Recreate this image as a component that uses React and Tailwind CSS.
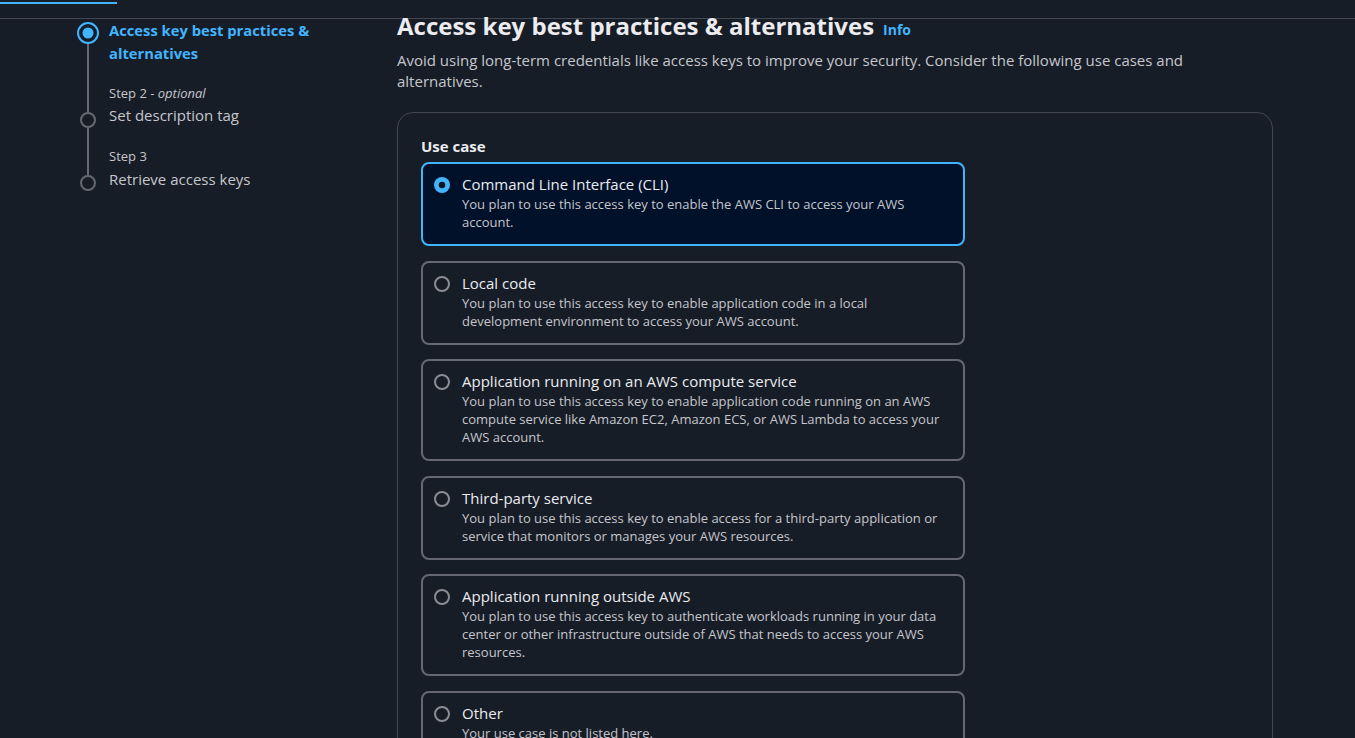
import React from 'react';

const FONT = { fontFamily: '"Open Sans", "Noto Sans", Arial, sans-serif' };

const USE_CASES = [
    {
        id: 'cli',
        title: 'Command Line Interface (CLI)',
        desc: 'You plan to use this access key to enable the AWS CLI to access your AWS account.',
    },
    {
        id: 'local',
        title: 'Local code',
        desc: 'You plan to use this access key to enable application code in a local development environment to access your AWS account.',
    },
    {
        id: 'compute',
        title: 'Application running on an AWS compute service',
        desc: 'You plan to use this access key to enable application code running on an AWS compute service like Amazon EC2, Amazon ECS, or AWS Lambda to access your AWS account.',
    },
    {
        id: 'third',
        title: 'Third-party service',
        desc: 'You plan to use this access key to enable access for a third-party application or service that monitors or manages your AWS resources.',
    },
    {
        id: 'outside',
        title: 'Application running outside AWS',
        desc: 'You plan to use this access key to authenticate workloads running in your data center or other infrastructure outside of AWS that needs to access your AWS resources.',
    },
    {
        id: 'other',
        title: 'Other',
        desc: 'Your use case is not listed here.',
    },
];

function Radio({ checked }) {
    return (
        <svg width="16" height="16" viewBox="0 0 16 16" className="shrink-0 mt-[4px]">
            {checked ? (
                <>
                    <circle cx="8" cy="8" r="8" fill="#42b4ff" />
                    <circle cx="8" cy="8" r="3.2" fill="#0f141a" />
                </>
            ) : (
                <circle cx="8" cy="8" r="7" fill="none" stroke="#8c8c94" strokeWidth="2" />
            )}
        </svg>
    );
}

function Tile({ item, checked }) {
    return (
        <div
            className={
                checked
                    ? 'flex gap-[12px] rounded-lg border-2 border-[#42b4ff] bg-[#001129] pl-[11px] pr-[14px] pt-[9px] pb-[13px]'
                    : 'flex gap-[12px] rounded-lg border-2 border-[#656871] pl-[11px] pr-[14px] pt-[9px] pb-[13px]'
            }
        >
            <Radio checked={checked} />
            <div className="flex-1">
                <div className="text-[15px] leading-[22px] text-[#ebebf0]">{item.title}</div>
                <div className="text-[13px] leading-[18px] text-[#c6c6cd]">{item.desc}</div>
            </div>
        </div>
    );
}

function StepDot({ active }) {
    if (active) {
        return (
            <svg width="22" height="22" viewBox="0 0 22 22" className="shrink-0 mt-[2px]">
                <circle cx="11" cy="11" r="10" fill="none" stroke="#42b4ff" strokeWidth="2" />
                <circle cx="11" cy="11" r="5.5" fill="#42b4ff" />
            </svg>
        );
    }
    return (
        <svg width="16" height="16" viewBox="0 0 16 16" className="shrink-0">
            <circle cx="8" cy="8" r="7" fill="none" stroke="#656871" strokeWidth="2" />
        </svg>
    );
}

function Steps() {
    return (
        <div className="w-[397px] shrink-0 pl-[77px] pt-[1px]">
            {/* step 1 */}
            <div className="flex gap-[10px]">
                <div className="flex w-[22px] flex-col items-center">
                    <StepDot active />
                    <div className="w-[2px] flex-1 bg-[#656871]" />
                </div>
                <div className="-mt-[1px] pb-[21px] text-[14.75px] font-bold leading-[23px] text-[#42b4ff]">
                    Access key best practices &amp;<br />alternatives
                </div>
            </div>
            {/* step 2 */}
            <div className="flex gap-[10px]">
                <div className="flex w-[22px] flex-col items-center">
                    <div className="h-[26px] w-[2px] bg-[#656871]" />
                    <StepDot />
                    <div className="w-[2px] flex-1 bg-[#656871]" />
                </div>
                <div className="-mt-[1px] pb-[23px]">
                    <div className="text-[13px] leading-[16px] text-[#c6c6cd]">
                        Step 2 - <span className="italic">optional</span>
                    </div>
                    <div className="mt-[3px] text-[15px] leading-[22px] text-[#c6c6cd]">Set description tag</div>
                </div>
            </div>
            {/* step 3 */}
            <div className="flex gap-[10px]">
                <div className="flex w-[22px] flex-col items-center">
                    <div className="h-[26px] w-[2px] bg-[#656871]" />
                    <StepDot />
                </div>
                <div className="-mt-[1px]">
                    <div className="text-[13px] leading-[16px] text-[#c6c6cd]">Step 3</div>
                    <div className="mt-[4px] text-[15px] leading-[22px] text-[#c6c6cd]">Retrieve access keys</div>
                </div>
            </div>
        </div>
    );
}

export default function App() {
    return (
        <div className="h-[738px] w-full overflow-hidden bg-[#161d26]" style={FONT}>
            {/* breadcrumb strip, scrolled almost out of view */}
            <div className="h-[17px] border-b border-[#424650]">
                <div className="mt-[2px] h-[2px] w-[117px] bg-[#42b4ff]" />
            </div>

            <div className="flex">
                <Steps />

                <div className="w-[876px] shrink-0">
                    <h1 className="-mt-[2px] h-[18px] text-[24px] font-bold leading-[18px] text-[#ebebf0]">
                        Access key best practices &amp; alternatives
                        <span className="ml-[9px] text-[14px] font-bold leading-[18px] text-[#42b4ff]">Info</span>
                    </h1>
                    <p className="mt-[15px] pr-6 text-[15px] leading-[21px] text-[#c6c6cd]">
                        Avoid using long-term credentials like access keys to improve your security. Consider the following use cases and alternatives.
                    </p>

                    <div className="mt-5 rounded-2xl border border-[#424650] px-[23px] pt-[23px] pb-6">
                        <div className="mb-[6px] text-[15px] font-bold leading-[20px] text-[#ebebf0]">Use case</div>
                        <div className="flex w-[544px] flex-col gap-[14.6px]">
                            {USE_CASES.map((u, i) => (
                                <Tile key={u.id} item={u} checked={i === 0} />
                            ))}
                        </div>
                    </div>
                </div>
            </div>
        </div>
    );
}
